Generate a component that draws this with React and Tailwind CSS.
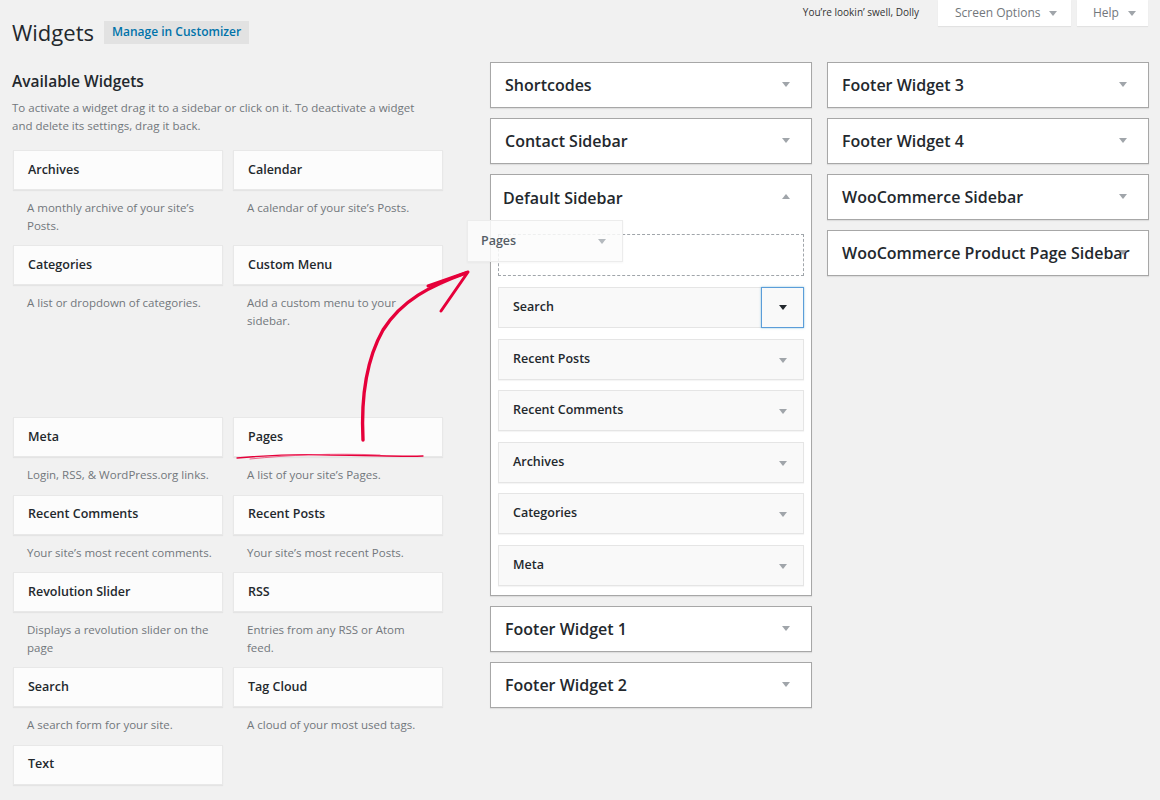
import React from "react";

const Tri = ({ className = "", up = false }) => (
  <svg width="8" height="5" viewBox="0 0 8 5" className={className}>
    <path d={up ? "M0 5h8L4 0z" : "M0 0h8L4 5z"} fill="currentColor" />
  </svg>
);

const Card = ({ title }) => (
  <div className="h-[40px] flex items-center px-[14px] bg-[#fcfcfc] border border-[#e8e8e8] shadow-[0_1px_1px_rgba(0,0,0,0.05)]">
    <span className="text-[12.5px] font-semibold text-[#23282d]">{title}</span>
  </div>
);

const Desc = ({ lines }) => (
  <div className="pt-[9px] pb-[11px] pl-[14px] text-[11.5px] leading-[17.5px] text-[#72777c] whitespace-nowrap">
    {lines.map((l, i) => (
      <div key={i}>{l}</div>
    ))}
  </div>
);

const Cell = ({ w }) => (
  <div>
    <Card title={w.t} />
    {w.d && <Desc lines={w.d} />}
  </div>
);

const rows = [
  [
    { t: "Archives", d: ["A monthly archive of your site’s", "Posts."] },
    { t: "Calendar", d: ["A calendar of your site’s Posts."] },
  ],
  [
    { t: "Categories", d: ["A list or dropdown of categories."] },
    { t: "Custom Menu", d: ["Add a custom menu to your", "sidebar."] },
  ],
  "spacer",
  [
    { t: "Meta", d: ["Login, RSS, & WordPress.org links."] },
    { t: "Pages", d: ["A list of your site’s Pages."] },
  ],
  [
    { t: "Recent Comments", d: ["Your site’s most recent comments."] },
    { t: "Recent Posts", d: ["Your site’s most recent Posts."] },
  ],
  [
    { t: "Revolution Slider", d: ["Displays a revolution slider on the", "page"] },
    { t: "RSS", d: ["Entries from any RSS or Atom", "feed."] },
  ],
  [
    { t: "Search", d: ["A search form for your site."] },
    { t: "Tag Cloud", d: ["A cloud of your most used tags."] },
  ],
  [{ t: "Text" }],
];

const Box = ({ title }) => (
  <div className="relative h-[46px] bg-white border border-[#a7a7a7] shadow-[0_1px_1px_rgba(0,0,0,0.08)] flex items-center pl-[14px] overflow-hidden">
    <span className="text-[16px] font-semibold text-[#23282d] whitespace-nowrap">{title}</span>
    <Tri className="absolute right-[21px] top-[19px] text-[#a0a5aa]" />
  </div>
);

const Inner = ({ title }) => (
  <div className="relative h-[41px] bg-[#f9f9f9] border border-[#e5e5e5] shadow-[0_1px_1px_rgba(0,0,0,0.04)] flex items-center pl-[14px]">
    <span className="text-[12.5px] font-semibold text-[#23282d]">{title}</span>
    <Tri className="absolute right-[16px] top-[18px] text-[#a0a5aa]" />
  </div>
);

export default function App() {
  return (
    <div className="relative w-[1160px] h-[800px] overflow-hidden bg-[#f1f1f1] font-['Open_Sans',sans-serif] text-[#23282d]">
      {/* Header */}
      <div className="h-[50px] flex justify-between items-start">
        <div className="flex items-center gap-[10px] pl-[12px] pt-[20px]">
          <h1 className="text-[22px] leading-[24px] font-normal text-[#23282d]">Widgets</h1>
          <span className="h-[23px] flex items-center px-[8px] bg-[#e2e2e2] text-[12px] font-semibold text-[#0073aa]">
            Manage in Customizer
          </span>
        </div>
        <div className="flex items-start pr-[12px]">
          <span className="pt-[5px] text-[10px] text-[#333] mr-[19px]">You’re lookin’ swell, Dolly</span>
          <div className="h-[26px] w-[133px] bg-white shadow-[0_1px_1px_rgba(0,0,0,0.06)] flex items-center pl-[17px] gap-[9px] text-[12px] text-[#72777c]">
            Screen Options <Tri className="text-[#a0a5aa]" />
          </div>
          <div className="ml-[6px] h-[26px] w-[71px] bg-white shadow-[0_1px_1px_rgba(0,0,0,0.06)] flex items-center pl-[16px] gap-[9px] text-[12px] text-[#72777c]">
            Help <Tri className="text-[#a0a5aa]" />
          </div>
        </div>
      </div>

      {/* Main */}
      <div className="mt-[12px] flex items-start pl-[13px]">
        {/* Available widgets */}
        <div className="w-[430px]">
          <div className="pt-[9px]">
            <h2 className="-ml-[1px] text-[15.5px] leading-[20px] font-semibold text-[#23282d]">Available Widgets</h2>
            <div className="-ml-[1px] mt-[8px] mb-[15px] text-[11.5px] leading-[18px] text-[#72777c] whitespace-nowrap">
              <div>To activate a widget drag it to a sidebar or click on it. To deactivate a widget</div>
              <div>and delete its settings, drag it back.</div>
            </div>
          </div>
          <div className="flex flex-col">
            {rows.map((r, i) =>
              r === "spacer" ? (
                <div key={i} className="h-[77px]" />
              ) : (
                <div key={i} className="grid grid-cols-[210px_210px] gap-x-[10px]">
                  {r.map((w) => (
                    <Cell key={w.t} w={w} />
                  ))}
                </div>
              )
            )}
          </div>
        </div>

        {/* Middle column */}
        <div className="ml-[47px] w-[322px] flex flex-col gap-[10px]">
          <Box title="Shortcodes" />
          <Box title="Contact Sidebar" />
          <div className="relative bg-white border border-[#a7a7a7] shadow-[0_1px_1px_rgba(0,0,0,0.08)]">
            <div className="relative h-[45px] flex items-center pl-[12px]">
              <span className="text-[16px] font-semibold text-[#23282d]">Default Sidebar</span>
              <Tri up className="absolute right-[21px] top-[19px] text-[#a0a5aa]" />
            </div>
            <div className="px-[7px] pt-[14px] pb-[9px] flex flex-col gap-[10.5px]">
              <div className="h-[42px] border border-dashed border-[#a0a5aa] mb-[0.5px]" />
              <div className="relative h-[41px] bg-[#f9f9f9] border border-[#e5e5e5] flex items-center pl-[14px]">
                <span className="text-[12.5px] font-semibold text-[#23282d]">Search</span>
                <div className="absolute -right-[1px] -top-[1px] h-[41px] w-[43px] border border-[#5b9dd9] shadow-[0_0_2px_rgba(30,140,190,0.5)] flex items-center justify-center bg-[#f9f9f9]">
                  <Tri className="text-[#23282d]" />
                </div>
              </div>
              <Inner title="Recent Posts" />
              <Inner title="Recent Comments" />
              <Inner title="Archives" />
              <Inner title="Categories" />
              <Inner title="Meta" />
            </div>
            {/* drag helper */}
            <div className="absolute left-[-24px] top-[45px] w-[156px] h-[42px] bg-[#fbfbfb]/85 border border-[#ececec] flex items-center pl-[13px] shadow-[0_1px_2px_rgba(0,0,0,0.04)]">
              <span className="text-[12.5px] font-semibold text-[#555d66]">Pages</span>
              <Tri className="absolute right-[16px] top-[18px] text-[#b4b9be]" />
            </div>
          </div>
          <Box title="Footer Widget 1" />
          <Box title="Footer Widget 2" />
        </div>

        {/* Right column */}
        <div className="ml-[15px] w-[322px] flex flex-col gap-[10px]">
          <Box title="Footer Widget 3" />
          <Box title="Footer Widget 4" />
          <Box title="WooCommerce Sidebar" />
          <Box title="WooCommerce Product Page Sidebar" />
        </div>
      </div>

      {/* Red annotation */}
      <svg className="absolute left-0 top-0 pointer-events-none" width="1160" height="800" viewBox="0 0 1160 800">
        <path d="M363 440 C361 400 366 360 383 330 C402 300 430 286 466 273" fill="none" stroke="#e6003a" strokeWidth="3.4" strokeLinecap="round" />
        <path d="M428 286 L468 272 L441 311" fill="none" stroke="#e6003a" strokeWidth="3" strokeLinecap="round" strokeLinejoin="round" />
        <path d="M237 458 C270 455 300 454 330 455 C370 455 400 457 423 456" fill="none" stroke="#e6003a" strokeWidth="1.3" strokeLinecap="round" />
        <path d="M250 459 C290 455 330 453 380 455" fill="none" stroke="#f04070" strokeWidth="0.8" strokeLinecap="round" />
      </svg>
    </div>
  );
}
